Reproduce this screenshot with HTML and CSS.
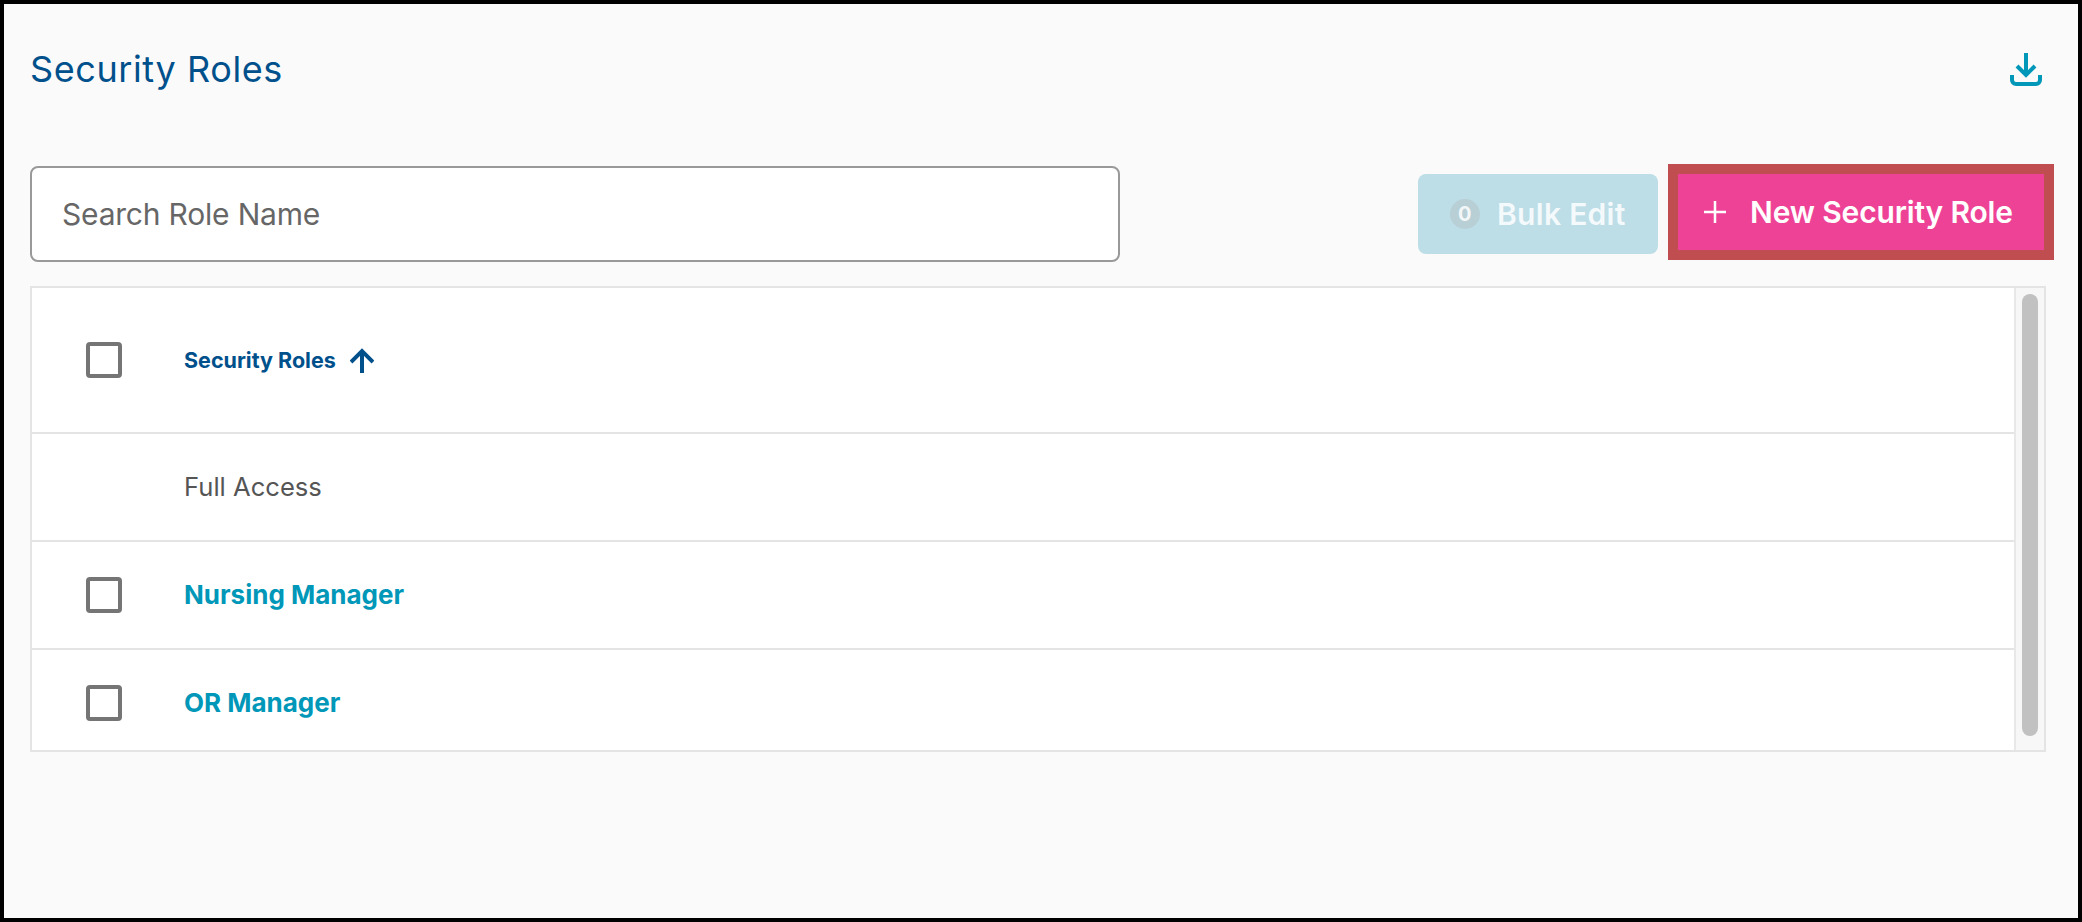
FILE: index.html
```html
<!DOCTYPE html>
<html>

<head>
  <meta charset="UTF-8">
  <title>Security Roles</title>
  <link rel="stylesheet" href="styles.css">
</head>

<body>
  <div id="container">

    <div class="header">
      <h1 class="page-title">Security Roles</h1>
      <button class="icon-btn" aria-label="Download">
        <svg width="32" height="33" viewBox="0 0 32 33" fill="none" stroke="#0097b8" stroke-width="4">
          <path d="M16 0v21" />
          <path d="M7 13l9 9 9-9" />
          <path d="M2 22v5a4 4 0 0 0 4 4h20a4 4 0 0 0 4-4v-5" />
        </svg>
      </button>
    </div>

    <div class="toolbar">
      <input class="search" type="text" placeholder="Search Role Name">
      <button class="btn btn-bulk"><span class="count">0</span>Bulk Edit</button>
      <button class="btn btn-new">
        <svg width="22" height="22" viewBox="0 0 22 22" stroke="#fff" stroke-width="2.5">
          <path d="M11 0v22M0 11h22" />
        </svg>
        New Security Role
      </button>
    </div>

    <div class="table">
      <div class="rows">
        <div class="row row-head">
          <span class="check"></span>
          <span class="col-title">Security Roles</span>
          <svg class="sort" width="24" height="25" viewBox="0 0 24 25" fill="none" stroke="#00508c" stroke-width="4">
            <path d="M12 25V3" />
            <path d="M1 14L12 3l11 11" />
          </svg>
        </div>
        <div class="row">
          <span class="check check-none"></span>
          <span class="plain">Full Access</span>
        </div>
        <div class="row">
          <span class="check"></span>
          <a class="role" href="#">Nursing Manager</a>
        </div>
        <div class="row">
          <span class="check"></span>
          <a class="role" href="#">OR Manager</a>
        </div>
      </div>
      <div class="track">
        <div class="thumb"></div>
      </div>
    </div>

  </div>
</body>

</html>
```

FILE: styles.css
```css
body,
html {
  padding: 0;
  margin: 0;
  height: 100%;
}

body {
  font-family: Inter, Lato, Arial, sans-serif;
  background: #000;
}

#container {
  box-sizing: border-box;
  height: 100%;
  border: 4px solid #000;
  background: #fafafa;
  padding: 0 32px 0 26px;
  overflow: hidden;
}

.header {
  height: 162px;
  display: flex;
  justify-content: space-between;
  align-items: flex-start;
}

.page-title {
  margin: 42px 0 0;
  font-size: 36px;
  line-height: 46px;
  font-weight: 400;
  letter-spacing: 0.6px;
  color: #00508c;
}

.icon-btn {
  margin: 49px 4px 0 0;
  padding: 0;
  background: none;
  border: none;
  display: flex;
}

.toolbar {
  display: flex;
  align-items: flex-start;
  padding-right: 2px;
  margin-bottom: 24px;
}

.search {
  box-sizing: border-box;
  width: 1090px;
  height: 96px;
  border: 2px solid #999;
  border-radius: 8px;
  background: #fff;
  padding: 0 30px;
  font-family: inherit;
  font-size: 30px;
  letter-spacing: -0.2px;
  color: #666;
  margin-right: auto;
}

.search::placeholder {
  color: #666;
  opacity: 1;
}

.btn {
  margin-top: 8px;
  border: none;
  font-family: inherit;
  font-size: 30px;
  font-weight: 600;
  color: #fff;
  display: flex;
  align-items: center;
}

.btn-bulk {
  width: 240px;
  height: 80px;
  padding: 0 0 0 32px;
  background: #bddde7;
  border-radius: 8px;
  color: rgba(255, 255, 255, 0.85);
  letter-spacing: 0.3px;
  margin-right: 20px;
}

.count {
  width: 30px;
  height: 30px;
  border-radius: 50%;
  background: #b8cfd6;
  font-size: 20px;
  font-weight: 700;
  line-height: 30px;
  margin-right: 17px;
}

.btn-new {
  width: 366px;
  height: 76px;
  padding: 0 0 0 26px;
  background: #ee4296;
  outline: 10px solid #c04d4f;
  letter-spacing: -0.15px;
  gap: 24px;
}

.table {
  display: flex;
  height: 466px;
  box-sizing: border-box;
  border: 2px solid #e4e4e4;
  background: #fff;
}

.rows {
  flex: 1;
  overflow: hidden;
}

.row {
  box-sizing: border-box;
  height: 108px;
  display: flex;
  align-items: center;
  padding-left: 54px;
  border-bottom: 2px solid #e4e4e4;
}

.row-head {
  height: 146px;
}

.check {
  box-sizing: border-box;
  width: 36px;
  height: 36px;
  border: 4px solid #757575;
  border-radius: 4px;
  margin-right: 62px;
}

.check-none {
  border: none;
}

.col-title {
  font-size: 21.5px;
  font-weight: 700;
  color: #00508c;
}

.sort {
  margin-left: 14px;
}

.plain {
  font-size: 25.6px;
  margin-bottom: 2px;
  color: #555;
}

.role {
  font-size: 26px;
  font-weight: 700;
  margin-bottom: 2px;
  color: #0097b8;
  text-decoration: none;
}

.track {
  box-sizing: border-box;
  width: 30px;
  padding: 6px 6px 14px;
  background: #f7f7f7;
  border-left: 2px solid #e8e8e8;
}

.thumb {
  height: 100%;
  border-radius: 8px;
  background: #c1c1c1;
}
```
